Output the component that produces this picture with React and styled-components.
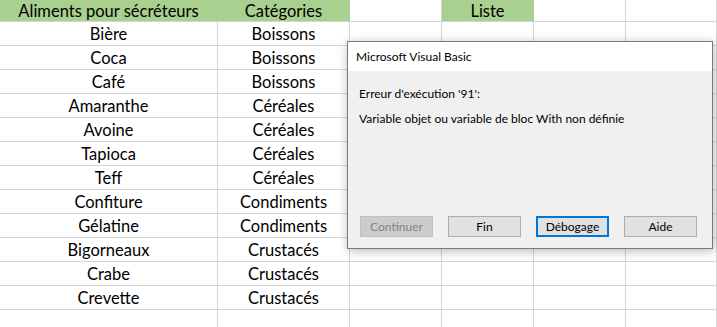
import React from 'react';
import styled, { createGlobalStyle } from 'styled-components';

const GlobalStyle = createGlobalStyle`
  html, body {
    margin: 0;
    padding: 0;
    background: #ffffff;
    overflow: hidden;
  }
`;

const Page = styled.div`
  position: relative;
  width: 717px;
  height: 327px;
  overflow: hidden;
  background: #ffffff;
`;

const Sheet = styled.div`
  display: grid;
  grid-template-columns: 218px 132px 92px 92px 92px 91px;
  grid-auto-rows: 24px;
  grid-template-rows: 22px;
  font-family: Lato, "Liberation Sans", sans-serif;
  font-size: 16.5px;
  color: #000000;
`;

const Cell = styled.div`
  display: flex;
  align-items: center;
  justify-content: center;
  box-sizing: border-box;
  border-right: 1px solid ${props => (props.header ? '#a9d08e' : '#d4d4d4')};
  border-bottom: 1px solid #d4d4d4;
  background: ${props => (props.header ? '#a9d08e' : '#ffffff')};
  white-space: nowrap;
  overflow: hidden;
`;

const Dialog = styled.div`
  position: absolute;
  left: 347px;
  top: 41px;
  width: 366px;
  height: 208px;
  box-sizing: border-box;
  display: flex;
  flex-direction: column;
  border: 1px solid #7a7a7a;
  background: #f0f0f0;
  box-shadow: 1px 2px 10px rgba(0, 0, 0, 0.28);
  font-family: Lato, "Noto Sans", sans-serif;
  font-size: 12px;
  color: #000000;
`;

const TitleBar = styled.div`
  height: 29px;
  display: flex;
  align-items: center;
  padding-left: 8px;
  background: #ffffff;
  font-size: 12px;
`;

const Body = styled.div`
  flex: 1;
  display: flex;
  flex-direction: column;
  padding: 15px 12px 11px 11px;
`;

const Message = styled.p`
  margin: 0 0 ${props => props.gap || '9px'} 0;
  line-height: 16px;
`;

const ButtonRow = styled.div`
  margin-top: auto;
  display: flex;
  gap: 15px;
  padding-left: 1px;
`;

const Button = styled.div`
  width: 73px;
  height: 21px;
  box-sizing: border-box;
  display: flex;
  align-items: center;
  justify-content: center;
  background: ${props => (props.disabled ? '#cccccc' : '#e1e1e1')};
  border: ${props => (props.focused ? '2px solid #0078d7' : `1px solid ${props.disabled ? '#bfbfbf' : '#adadad'}`)};
  color: ${props => (props.disabled ? '#838383' : '#000000')};
`;

const rows = [
  ['Bière', 'Boissons'],
  ['Coca', 'Boissons'],
  ['Café', 'Boissons'],
  ['Amaranthe', 'Céréales'],
  ['Avoine', 'Céréales'],
  ['Tapioca', 'Céréales'],
  ['Teff', 'Céréales'],
  ['Confiture', 'Condiments'],
  ['Gélatine', 'Condiments'],
  ['Bigorneaux', 'Crustacés'],
  ['Crabe', 'Crustacés'],
  ['Crevette', 'Crustacés'],
  ['', ''],
];

export default function App() {
  return (
    <Page>
      <GlobalStyle />
      <Sheet>
        <Cell header>Aliments pour sécréteurs</Cell>
        <Cell header>Catégories</Cell>
        <Cell />
        <Cell header>Liste</Cell>
        <Cell />
        <Cell />
        {rows.map(([aliment, categorie], i) => (
          <React.Fragment key={i}>
            <Cell>{aliment}</Cell>
            <Cell>{categorie}</Cell>
            <Cell />
            <Cell />
            <Cell />
            <Cell />
          </React.Fragment>
        ))}
      </Sheet>
      <Dialog>
        <TitleBar>Microsoft Visual Basic</TitleBar>
        <Body>
          <Message>Erreur d'exécution '91':</Message>
          <Message>Variable objet ou variable de bloc With non définie</Message>
          <ButtonRow>
            <Button disabled>Continuer</Button>
            <Button>Fin</Button>
            <Button focused>Débogage</Button>
            <Button>Aide</Button>
          </ButtonRow>
        </Body>
      </Dialog>
    </Page>
  );
}
